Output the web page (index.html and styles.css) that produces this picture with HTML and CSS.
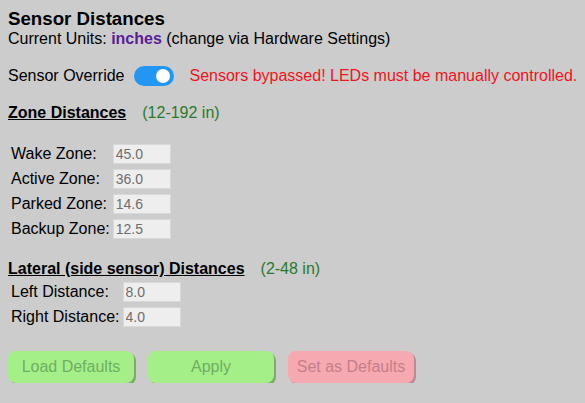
FILE: index.html
```html
<!DOCTYPE html>
<html lang="en">
<head>
    <meta charset="UTF-8">
    <meta name="viewport" content="width=device-width, initial-scale=1.0">
    <title>Sensor Distances</title>
    <link rel="stylesheet" href="styles.css">
</head>
<body>

    <h3 class="title">Sensor Distances</h3>
    <div class="units">Current Units: <b class="unit-name">inches</b> (change via Hardware Settings)</div>

    <div class="override">
        <span>Sensor Override</span>
        <label class="switch"><span class="knob"></span></label>
        <span class="warning">Sensors bypassed! LEDs must be manually controlled.</span>
    </div>

    <div class="section-head zone-head">
        <span class="section-title">Zone Distances</span><span class="range">(12-192 in)</span>
    </div>
    <div class="fields zone-fields">
        <label>Wake Zone:</label><input type="text" value="45.0" disabled>
        <label>Active Zone:</label><input type="text" value="36.0" disabled>
        <label>Parked Zone:</label><input type="text" value="14.6" disabled>
        <label>Backup Zone:</label><input type="text" value="12.5" disabled>
    </div>

    <div class="section-head lateral-head">
        <span class="section-title">Lateral (side sensor) Distances</span><span class="range">(2-48 in)</span>
    </div>
    <div class="fields lateral-fields">
        <label>Left Distance:</label><input type="text" value="8.0" disabled>
        <label>Right Distance:</label><input type="text" value="4.0" disabled>
    </div>

    <div class="actions">
        <button class="btn btn-green" disabled>Load Defaults</button>
        <button class="btn btn-green" disabled>Apply</button>
        <button class="btn btn-red" disabled>Set as Defaults</button>
    </div>

</body>
</html>
```

FILE: styles.css
```css
body {
    font-family: 'Liberation Sans', Arial, sans-serif;
    font-size: 16px;
    background-color: #cccccc;
    color: #000;
    margin: 8px;
}

.title {
    font-size: 18.7px;
    line-height: 22px;
    margin: 0;
}

.units {
    line-height: 18px;
}

.unit-name {
    color: #5a1e96;
}

.override {
    display: flex;
    align-items: center;
    height: 20px;
    margin-top: 18px;
    white-space: nowrap;
}

.switch {
    position: relative;
    flex-shrink: 0;
    width: 40px;
    height: 20px;
    border-radius: 10px;
    background-color: #2196f3;
    margin-left: 9px;
}

.knob {
    position: absolute;
    top: 3px;
    right: 4px;
    width: 14px;
    height: 14px;
    border-radius: 50%;
    background-color: #fff;
}

.warning {
    color: #f0141e;
    margin-left: 16px;
}

.section-head {
    line-height: 18px;
}

.zone-head {
    margin-top: 18px;
}

.lateral-head {
    margin-top: 21px;
}

.section-title {
    font-weight: bold;
    text-decoration: underline;
}

.range {
    color: #2a7a2a;
    margin-left: 16px;
}

.fields {
    display: grid;
    grid-template-columns: auto 58px;
    justify-content: start;
    align-items: center;
    row-gap: 5px;
    column-gap: 3px;
    padding-left: 3px;
}

.zone-fields {
    margin-top: 22px;
}

.lateral-fields {
    margin-top: 4px;
}

.fields input {
    box-sizing: border-box;
    width: 58px;
    height: 20px;
    padding: 0 2px;
    font-family: 'Liberation Sans', Arial, sans-serif;
    font-size: 14px;
    color: #6d6d6d;
    background-color: #eeeeee;
    border: 1px solid #d8d8d8;
    margin: 0;
}

.actions {
    display: flex;
    gap: 14px;
    margin-top: 24px;
}

.btn {
    width: 126px;
    height: 32px;
    border: none;
    border-radius: 8px;
    font-family: 'Liberation Sans', Arial, sans-serif;
    font-size: 16px;
    padding: 0;
}

.btn-green {
    background-color: #a5ef88;
    color: #6fae63;
    box-shadow: 2px 2px 0 #7cab6b;
}

.btn-red {
    background-color: #f7a9b2;
    color: #c47f8a;
    box-shadow: 2px 2px 0 #c08892;
}
```
